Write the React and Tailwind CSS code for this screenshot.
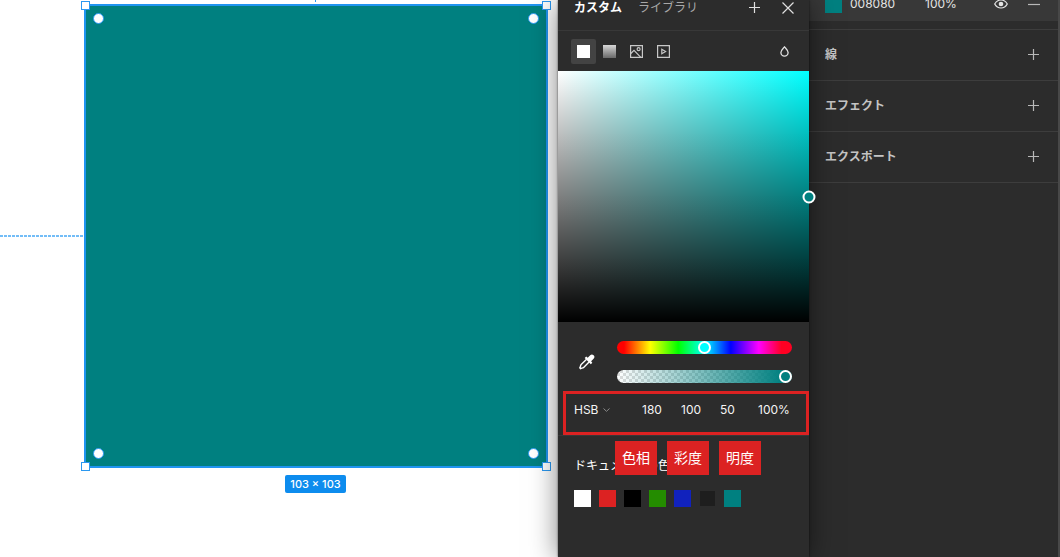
import clsx from 'clsx';

const SWATCHES = [
  { name: 'white', className: 'bg-white' },
  { name: 'red', className: 'bg-[#dc2222]' },
  { name: 'black', className: 'bg-black' },
  { name: 'green', className: 'bg-[#248c00]' },
  { name: 'blue', className: 'bg-[#1122bd]' },
  { name: 'dark', className: 'border border-[#2c2c2c] bg-[#1e1e1e]' },
  { name: 'teal', className: 'bg-[#008080]' },
];

const CHANNELS = [
  { label: '色相', value: '180', width: 'w-[39px]' },
  { label: '彩度', value: '100', width: 'w-[39px]' },
  { label: '明度', value: '50', width: 'w-[38px]' },
  { label: '不透明度', value: '100%', width: 'w-9' },
];

const SLIDER =
  'block h-[13px] w-full appearance-none rounded-full [&::-webkit-slider-thumb]:size-[13px] [&::-webkit-slider-thumb]:appearance-none [&::-webkit-slider-thumb]:rounded-full [&::-webkit-slider-thumb]:border-2 [&::-webkit-slider-thumb]:border-white';

function PlusIcon() {
  return (
    <svg className="size-3" viewBox="0 0 12 12" fill="none" stroke="currentColor" strokeWidth="1.2">
      <path d="M5.5 0v11M0 5.5h11" />
    </svg>
  );
}

function CloseIcon() {
  return (
    <svg className="size-3" viewBox="0 0 12 12" fill="none" stroke="currentColor" strokeWidth="1.2">
      <path d="M0.5 0.5l11 11M11.5 0.5l-11 11" />
    </svg>
  );
}

function EyeIcon() {
  return (
    <svg className="h-[10px] w-[14px]" viewBox="0 0 14 10" fill="none" stroke="currentColor" strokeWidth="1.2">
      <path d="M0.7 5C2.2 2.3 4.3 1 7 1s4.8 1.3 6.3 4C11.8 7.7 9.7 9 7 9S2.2 7.7 0.7 5z" />
      <circle cx="7" cy="5" r="2.3" fill="currentColor" stroke="none" />
    </svg>
  );
}

function ImageIcon() {
  return (
    <svg className="size-[13px]" viewBox="0 0 13 13" fill="none" stroke="currentColor" strokeWidth="1.2">
      <path d="M0.6 0.6h11.8v11.8h-11.8z" />
      <circle cx="8.6" cy="4.2" r="1.5" />
      <path d="M0.8 8.5L4 5.3l6.8 7" />
    </svg>
  );
}

function VideoIcon() {
  return (
    <svg className="size-[13px]" viewBox="0 0 13 13" fill="none" stroke="currentColor" strokeWidth="1.2">
      <path d="M0.6 0.6h11.8v11.8h-11.8z" />
      <path d="M4.8 4.2v4.6l3.8-2.3z" />
    </svg>
  );
}

function DropIcon() {
  return (
    <svg className="h-[11px] w-[9px]" viewBox="0 0 9 11" fill="none" stroke="currentColor" strokeWidth="1.3">
      <path d="M4.5 0.9C3 2.8 0.9 4.3 0.9 6.6a3.6 3.6 0 0 0 7.2 0C8.1 4.3 6 2.8 4.5 0.9z" />
    </svg>
  );
}

function EyedropperIcon() {
  return (
    <svg className="size-4" viewBox="0 0 16 16" fill="none" stroke="currentColor" strokeWidth="1.4">
      <path d="M7.6 5.2l-5.4 5.4c-.6.6-.7 1.2-.8 2l-.6 1.2.8.9 1.2-.6c.9-.1 1.5-.3 2.1-.9l5.4-5.4" strokeLinejoin="round" />
      <path
        d="M5.7 4.1l1.5-1.5 1.5 1.2 2.5-2.5a2.3 2.3 0 0 1 3.4 3.4l-2.5 2.5 1.2 1.5-1.5 1.5z"
        fill="currentColor"
        stroke="none"
      />
    </svg>
  );
}

function Handle({ className, round }) {
  return (
    <span
      className={clsx(
        'absolute border border-[#2b98f0] bg-white',
        round ? 'size-[11px] rounded-full' : 'size-[9px]',
        className,
      )}
    />
  );
}

function Canvas() {
  return (
    <main className="relative min-w-0 flex-1 overflow-hidden bg-white">
      <svg className="absolute top-[235px] left-0 h-[2px] w-[84px]" stroke="#45a8f5" strokeWidth="1.4">
        <path d="M0 1h84" strokeDasharray="3 1" />
      </svg>
      <span className="absolute top-0 left-[315px] h-[2px] w-px bg-[#2b98f0]" />
      <div className="absolute top-1 left-[84px] size-[464px] border-2 border-[#2094f0] bg-[#008080]">
        <Handle className="-top-[5px] -left-[5px]" />
        <Handle className="-top-[5px] -right-[5px]" />
        <Handle className="-bottom-[5px] -left-[5px]" />
        <Handle className="-right-[5px] -bottom-[5px]" />
        <Handle round className="top-[7px] left-[7px]" />
        <Handle round className="top-[7px] right-[7px]" />
        <Handle round className="bottom-[7px] left-[7px]" />
        <Handle round className="right-[7px] bottom-[7px]" />
      </div>
      <div className="absolute top-[475px] left-[285px] flex h-[18px] w-[61px] items-center justify-center rounded-xs bg-[#0d8cee] text-[11px] font-medium whitespace-nowrap text-white">
        103 × 103
      </div>
    </main>
  );
}

function ColorPicker() {
  return (
    <section className="relative z-10 w-[251px] shrink-0 bg-[#2c2c2c] text-white shadow-[0_2px_26px_rgba(0,0,0,0.5),0_0_2px_rgba(0,0,0,0.6)]">
      <header className="-mt-[15px] flex h-[46px] items-center border-b border-[#383838] pr-[15px] pl-4 text-xs">
        <button type="button" className="font-bold">
          カスタム
        </button>
        <button type="button" className="ml-4 text-[#a8a8a8]">
          ライブラリ
        </button>
        <button type="button" aria-label="追加" className="ml-auto text-[#e0e0e0]">
          <PlusIcon />
        </button>
        <button type="button" aria-label="閉じる" className="ml-[21px] text-[#e0e0e0]">
          <CloseIcon />
        </button>
      </header>

      <div className="flex h-10 items-center pr-5 pl-[13px] text-[#c8c8c8]">
        <button type="button" aria-label="単色" className="grid size-[25px] place-items-center rounded-xs bg-[#434343]">
          <span className="size-[13px] bg-white" />
        </button>
        <button type="button" aria-label="グラデーション" className="ml-[7px]">
          <span className="block size-[13px] bg-linear-to-b from-[#d8d8d8] to-[#6a6a6a]" />
        </button>
        <button type="button" aria-label="画像" className="ml-[14px]">
          <ImageIcon />
        </button>
        <button type="button" aria-label="動画" className="ml-[14px]">
          <VideoIcon />
        </button>
        <button type="button" aria-label="ブレンドモード" className="ml-auto text-[#e0e0e0]">
          <DropIcon />
        </button>
      </div>

      <div className="relative aspect-square w-full bg-[linear-gradient(to_top,#000,transparent),linear-gradient(to_right,#fff,#00ffff)]">
        <span className="absolute top-1/2 left-full size-[13px] -translate-1/2 rounded-full border-2 border-white bg-[#008080]" />
      </div>

      <div className="flex items-center gap-[22px] pt-[19px] pr-[17px] pl-[21px]">
        <button type="button" aria-label="スポイト">
          <EyedropperIcon />
        </button>
        <div className="flex flex-1 flex-col gap-4">
          <input
            type="range"
            aria-label="色相"
            min="0"
            max="360"
            defaultValue="180"
            className={clsx(
              SLIDER,
              'bg-[linear-gradient(to_right,#f00_4%,#ff0_19%,#0f0_35%,#0ff_50%,#00f_65%,#f0f_81%,#f02_94%)] [&::-webkit-slider-thumb]:bg-[#00ffff]',
            )}
          />
          <input
            type="range"
            aria-label="不透明度"
            min="0"
            max="100"
            defaultValue="100"
            className={clsx(
              SLIDER,
              'bg-[linear-gradient(to_right,rgba(0,128,128,0),#008080_95%),repeating-conic-gradient(#dcdcdc_0_25%,#fff_0_50%)] bg-[length:100%_100%,6px_6px] [&::-webkit-slider-thumb]:bg-[#008080]',
            )}
          />
        </div>
      </div>

      <div className="relative mt-2 flex h-[45px] border-b border-[#383838] pb-[6px] pl-4 text-xs text-[#f4f4f4]">
        <div className="relative flex w-[68px] items-center">
          <select aria-label="カラーモデル" className="w-11 appearance-none bg-transparent">
            <option>HSB</option>
            <option>RGB</option>
          </select>
          <svg className="pointer-events-none absolute left-[29px] h-1 w-[7px]" viewBox="0 0 7 4" fill="none" stroke="#8a8a8a">
            <path d="M0.5 0.5l3 2.8 3-2.8" />
          </svg>
        </div>
        {CHANNELS.map((channel) => (
          <input
            key={channel.label}
            aria-label={channel.label}
            defaultValue={channel.value}
            className={clsx('bg-transparent', channel.width)}
          />
        ))}
        <div className="pointer-events-none absolute inset-y-0 right-0 left-[5px] border-[3px] border-[#dc2222]" />
        <div className="absolute top-[50px] left-[57px] flex gap-[10px] text-sm text-white">
          {CHANNELS.slice(0, 3).map((channel) => (
            <span key={channel.label} className="flex h-[34px] w-[42px] items-center justify-center bg-[#dc2222]">
              {channel.label}
            </span>
          ))}
        </div>
      </div>

      <div className="px-4 pt-[22px]">
        <h2 className="text-xs leading-4">ドキュメントの色</h2>
        <div className="mt-4 flex gap-2">
          {SWATCHES.map((swatch) => (
            <button
              key={swatch.name}
              type="button"
              aria-label={swatch.name}
              className={clsx('size-[17px]', swatch.className)}
            />
          ))}
        </div>
      </div>
    </section>
  );
}

function PropertyRow({ title }) {
  return (
    <div className="flex h-[51px] items-center justify-between border-b border-[#3d3d3d] pr-[18px] pl-4">
      <h2 className="text-xs font-bold text-[#c4c4c4]">{title}</h2>
      <button type="button" aria-label={`${title}を追加`} className="text-[#b8b8b8]">
        <PlusIcon />
      </button>
    </div>
  );
}

function Inspector() {
  return (
    <aside className="w-[251px] shrink-0 border-r-2 border-[#484848] bg-[#2c2c2c]">
      <div className="-mt-[13px] border-b border-[#3d3d3d] pb-2">
        <div className="flex h-[34px] items-center bg-[#383838] pr-[18px] pl-4 text-xs text-[#e4e4e4]">
          <span className="size-[17px] bg-[#008080]" />
          <input aria-label="カラーコード" defaultValue="008080" className="ml-2 w-[75px] bg-transparent" />
          <input aria-label="塗りの不透明度" defaultValue="100%" className="w-10 bg-transparent" />
          <button type="button" aria-label="表示" className="ml-auto">
            <EyeIcon />
          </button>
          <button type="button" aria-label="削除" className="ml-5 text-[#b8b8b8]">
            <svg className="size-3" viewBox="0 0 12 12" fill="none" stroke="currentColor" strokeWidth="1.2">
              <path d="M0 6.5h12" />
            </svg>
          </button>
        </div>
      </div>
      <PropertyRow title="線" />
      <PropertyRow title="エフェクト" />
      <PropertyRow title="エクスポート" />
    </aside>
  );
}

export default function App() {
  return (
    <div className="flex h-screen overflow-hidden bg-[#2c2c2c] font-['Inter','Noto_Sans_CJK_JP',sans-serif]">
      <Canvas />
      <ColorPicker />
      <Inspector />
    </div>
  );
}
